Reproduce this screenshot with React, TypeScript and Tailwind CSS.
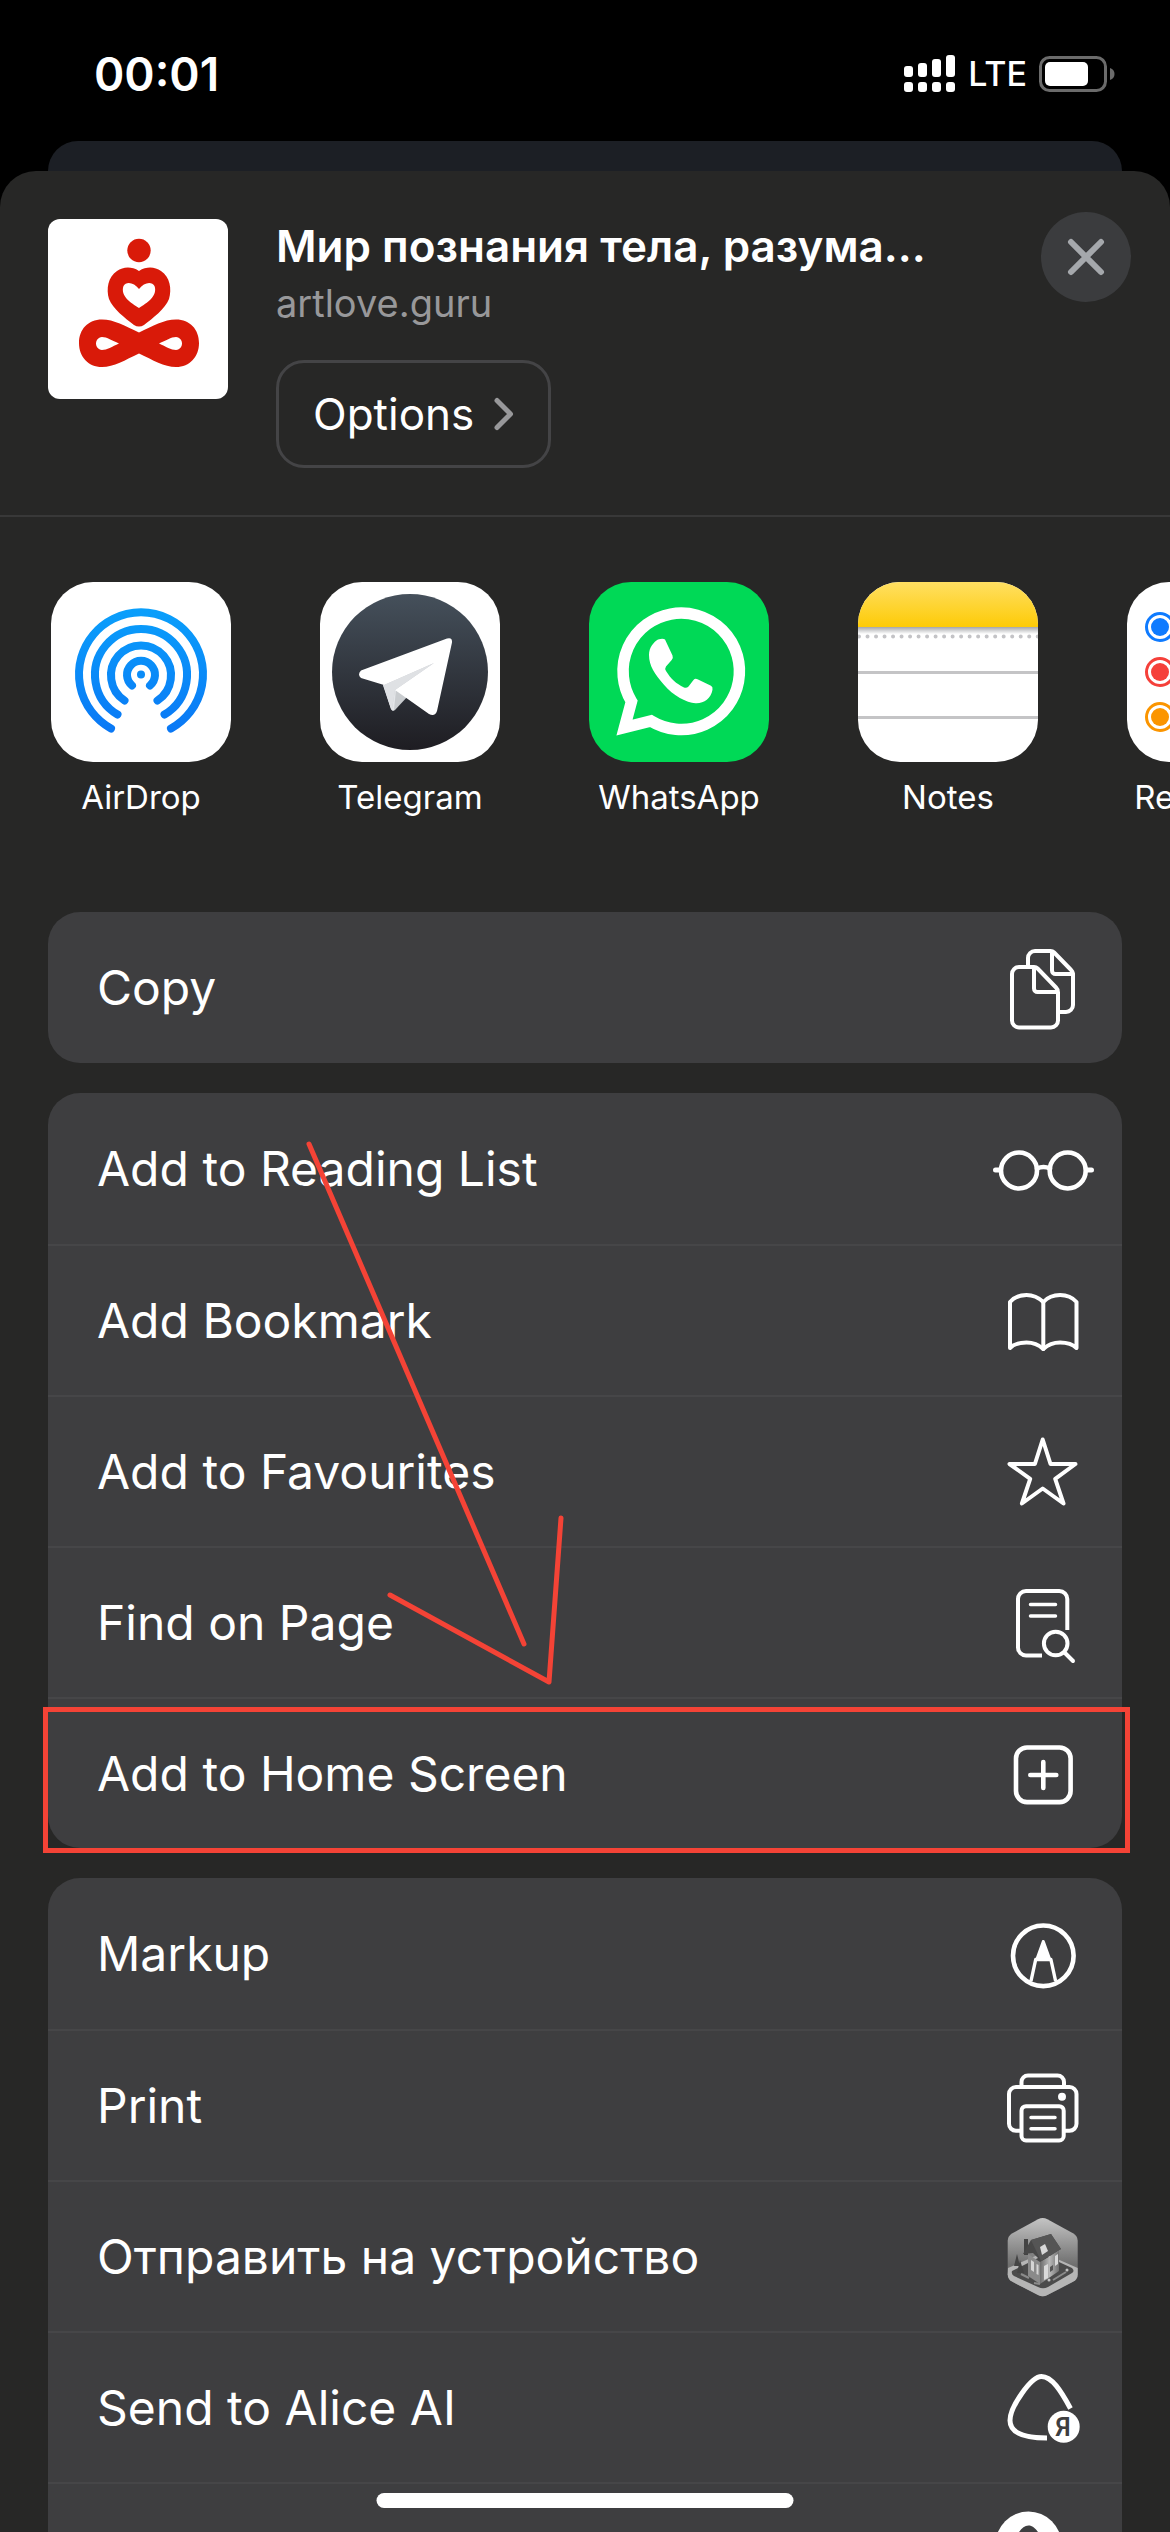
import React from 'react'

type Action = {
  label: string
  icon: React.ReactNode
  highlighted?: boolean
}

type ShareApp = {
  name: string
  icon: React.ReactNode
}

function Glyph({ children }: { children: React.ReactNode }) {
  return (
    <svg
      viewBox="0 0 102 102"
      className="size-[102px] shrink-0"
      fill="none"
      stroke="#fff"
      strokeWidth="4"
      strokeLinecap="round"
      strokeLinejoin="round"
      aria-hidden="true"
    >
      {children}
    </svg>
  )
}

function CopyIcon() {
  return (
    <Glyph>
      <path d="M36 29V21a7 7 0 0 1 7-7h15.500a5 5 0 0 1 3.600 1.500l17 17.500a6 6 0 0 1 1.900 4.500V68a7 7 0 0 1-7 7h-6" />
      <path d="M60 15v18.500a3.500 3.500 0 0 0 3.500 3.500H81" />
      <path d="M27 30h15a5 5 0 0 1 3.600 1.500L64 50.500a7 7 0 0 1 2 5V83.500a7 7 0 0 1-7 7H27a7 7 0 0 1-7-7V37a7 7 0 0 1 7-7z" />
      <path d="M42 31v20.500a3.500 3.500 0 0 0 3.500 3.500H65" />
    </Glyph>
  )
}

function GlassesIcon() {
  return (
    <Glyph>
      <circle cx="27" cy="52.500" r="18" strokeWidth="4.600" />
      <circle cx="75.700" cy="52.500" r="18" strokeWidth="4.600" />
      <path d="M45 50.500q6.500-3 13 0" strokeWidth="4.600" />
      <path d="M3.500 52H8M95 52h4.500" strokeWidth="5" />
    </Glyph>
  )
}

function BookIcon() {
  return (
    <Glyph>
      <path d="M51.300 32C46 27 40 25 34.500 25S22 27.500 18 32v46c4-4 10.500-5.500 16.500-5.500S47 75 51.300 79c4.300-4 10.800-6.500 16.800-6.500S80.500 74 84.500 78V32C80.500 27.500 74 25 68.100 25S56 27 51.300 32z" />
      <path d="M51.300 32v47" />
    </Glyph>
  )
}

function StarIcon() {
  return (
    <Glyph>
      <path d="M50.700 18.500l7.800 24.500h25L63.200 57.800 71.500 82.500 50.700 67.500 29.900 82.500l8.300-24.700L17.500 43h25.400z" />
    </Glyph>
  )
}

function FindIcon() {
  return (
    <Glyph>
      <path
        d="M75.300 58V27a8 8 0 0 0-8-8H34a8 8 0 0 0-8 8v48.500a8 8 0 0 0 8 8h16"
        strokeLinecap="butt"
      />
      <path d="M38.500 32.500h25M38.500 44h25" strokeWidth="3.500" />
      <circle cx="63.700" cy="71.500" r="11.800" />
      <path d="M72.500 80.500l8.500 8.500" />
    </Glyph>
  )
}

function AddIcon() {
  return (
    <Glyph>
      <rect x="24" y="24.500" width="54.600" height="54.600" rx="11" strokeWidth="4.600" />
      <path d="M51.300 39v26M38.300 52h26" strokeWidth="4.600" />
    </Glyph>
  )
}

function MarkupIcon() {
  return (
    <Glyph>
      <circle cx="51.300" cy="52.800" r="30.300" strokeWidth="4.600" />
      <path d="M51.300 38.500L45 56h12.600z" fill="#fff" strokeWidth="3" />
      <path d="M39 78l4.700-21.500h15.200L63.600 78" strokeWidth="3.400" strokeLinecap="butt" />
    </Glyph>
  )
}

function PrintIcon() {
  return (
    <Glyph>
      <path d="M29.500 31v-4a6.500 6.500 0 0 1 6.500-6.500h29.500a6.500 6.500 0 0 1 6.500 6.500v4" strokeLinecap="butt" />
      <path
        d="M29 75.800h-5a7 7 0 0 1-7-7V39a7 7 0 0 1 7-7h53.500a7 7 0 0 1 7 7v29.800a7 7 0 0 1-7 7h-5"
        strokeLinecap="butt"
      />
      <rect x="29.500" y="51.200" width="42.200" height="34.300" rx="4.500" />
      <path d="M39 62.500h24M39 73.800h24" strokeWidth="3.500" />
      <circle cx="70" cy="41.800" r="4" fill="#fff" stroke="none" />
    </Glyph>
  )
}

function HouseIcon() {
  return (
    <svg viewBox="0 0 102 102" className="size-[102px] shrink-0" aria-hidden="true">
      <defs>
        <linearGradient id="house-sky" x1="0" y1="0" x2="0" y2="1">
          <stop offset="0" stopColor="#c4c4c4" />
          <stop offset="0.600" stopColor="#6f6f6f" />
          <stop offset="1" stopColor="#8c8c8c" />
        </linearGradient>
        <linearGradient id="house-wall" x1="0" y1="0" x2="1" y2="0">
          <stop offset="0" stopColor="#6c6c6c" />
          <stop offset="0.500" stopColor="#b8b8b8" />
          <stop offset="1" stopColor="#707070" />
        </linearGradient>
      </defs>
      <path
        d="M46 13.200q4.700-2.400 9.400 0L81 27.200q4.700 2.600 4.700 7.500v33.500q0 5-4.700 7.600L55.400 89q-4.700 2.400-9.400 0L20.400 75.800q-4.700-2.600-4.700-7.600V34.700q0-4.900 4.700-7.500z"
        fill="url(#house-sky)"
      />
      <path
        d="M16 62l32-14q3-1.200 6 0l31.700 14v6.200q0 5-4.700 7.600L55.400 89q-4.700 2.400-9.400 0L20.400 75.800q-4.700-2.600-4.700-7.600z"
        fill="#b5b5b5"
      />
      <path d="M20 65l28-14h8l24 11q3 3 0 5L56 81q-5 2.500-10 0L22 70q-3-2-2-5z" fill="#4b4b4b" />
      <path d="M36 48l12 8v22l-12-8z" fill="#8a8a8a" />
      <path d="M48 56l19-11v20L48 78z" fill="url(#house-wall)" />
      <path d="M39 54l3 2v10l-3-2zM44.500 58l2 1v10l-2-1z" fill="#d4d4d4" />
      <path d="M52 60l4-2v14l-4 2zM63 50l3-2v10l-3 2z" fill="#dadada" />
      <path d="M58 61l3-2v5l-3 2z" fill="#555" />
      <path d="M32 33h4v16h-4zM25 48l3 12h-6zM28 54l4 13h-7z" fill="#444" />
      <path d="M31 48l8-14 20-6 10 15-20 12-8-8z" fill="#484848" />
      <path d="M39 34l20-6 10 15-20 12z" fill="#555" />
      <path d="M48 41l5-3 3 7-6 4z" fill="#d8d8d8" />
      <path d="M29 68l8 4M61 74l13-8M42 77l6 1" stroke="#8b8b8b" strokeWidth="2" />
      <circle cx="75" cy="64" r="1.500" fill="#c2c2c2" />
      <circle cx="57" cy="74" r="1.500" fill="#c2c2c2" />
    </svg>
  )
}

function AliceIcon() {
  return (
    <Glyph>
      <path
        d="M78.500 51.500C69 34 60 19.500 49.500 19.500S18 50 18 63.500C18 77 33 81 55 81"
        strokeWidth="5"
        strokeLinecap="butt"
      />
      <circle cx="71.700" cy="69.800" r="16" fill="#fff" stroke="none" />
      <text
        x="71"
        y="79"
        textAnchor="middle"
        fontSize="25"
        fontWeight="600"
        fontFamily="Roboto, sans-serif"
        fill="#3e3e40"
        stroke="none"
      >
        Я
      </text>
    </Glyph>
  )
}

function BadgeIcon() {
  return (
    <Glyph>
      <circle cx="36.500" cy="36.500" r="33" fill="#fff" stroke="none" />
      <path d="M36.500 17.500c-6 0-10 7-15 15v20h30v-20c-5-8-9-15-15-15z" fill="#3e3e40" stroke="none" />
    </Glyph>
  )
}

function YogaLogo() {
  return (
    <svg viewBox="0 0 180 180" className="mt-[7px] size-[180px] shrink-0 rounded-xl bg-white" aria-hidden="true">
      <circle cx="91" cy="31.500" r="11.700" fill="#d91a09" />
      <path
        fillRule="evenodd"
        fill="#d91a09"
        d="M91 52C83 47 75 48 69 52c-9 6-11 18-8 28 4 10 16 19 25 26q5 3 10 0c9-7 21-16 25-26 3-10 1-22-8-28-6-4-14-5-22 0zM91 70C86 63 78 62 75.500 67 72 77 83 84 91 89c8-5 19-12 15.500-22C104 62 96 63 91 70z"
      />
      <path
        fillRule="evenodd"
        fill="#d91a09"
        d="M91 113.500C77 107 66 100.500 54 100.500c-14 0-23 10-23 23.500s9 24 23 24c12 0 23-7 37-13.500C105 141 116 148 128 148c14 0 23-10.500 23-24s-9-23.500-23-23.500c-12 0-23 6.500-37 13zM71 124.500c-7-3-12-6.500-17-6.500-8 1-8 12 0 13 5 0 10-3.500 17-6.500zM111 124.500c7-3 12-6.500 17-6.500 8 1 8 12 0 13-5 0-10-3.500-17-6.500z"
      />
    </svg>
  )
}

function AirDropIcon() {
  return (
    <svg viewBox="0 0 180 180" className="size-[180px]" aria-hidden="true">
      <defs>
        <linearGradient id="airdrop" gradientUnits="userSpaceOnUse" x1="0" y1="27" x2="0" y2="150">
          <stop offset="0" stopColor="#0a9ffb" />
          <stop offset="1" stopColor="#0a78f5" />
        </linearGradient>
      </defs>
      <rect width="180" height="180" fill="#fff" />
      <g fill="none" stroke="url(#airdrop)" strokeWidth="8" strokeLinecap="round">
        <path d="M60 146.500a62 62 0 1 1 60 0" />
        <path d="M66.500 132.500a46 46 0 1 1 47 0" />
        <path d="M73.500 118.500a30 30 0 1 1 33 0" />
        <path d="M81 103.500a14 14 0 1 1 18 0" />
      </g>
      <circle cx="90" cy="92.500" r="4" fill="#0a8cf8" />
    </svg>
  )
}

function TelegramIcon() {
  return (
    <svg viewBox="0 0 180 180" className="size-[180px]" aria-hidden="true">
      <defs>
        <linearGradient id="telegram" x1="0" y1="0" x2="0" y2="1">
          <stop offset="0" stopColor="#45505b" />
          <stop offset="1" stopColor="#1e1d22" />
        </linearGradient>
      </defs>
      <rect width="180" height="180" fill="#fff" />
      <circle cx="90" cy="90" r="78" fill="url(#telegram)" />
      <path d="M63 103l8 24q2 3 4 1l13-14-8-8z" fill="#c9cccf" />
      <path d="M63 103l8 24q1.500 3 3 1l2-20 8-8-10-5z" fill="#e3e5e8" />
      <path
        d="M41 88.500L127 56.500q5.500-1.500 5 4L117 129q-2 6-8 3L75 108 64 103 41 96q-4-3.500 0-7.500z"
        fill="#fff"
      />
      <path d="M64 103l50-22-39 27-3 19z" fill="#cfd1d4" stroke="none" />
      <path d="M64 103l50-22-39 27-3 19q-1 1-8-24z" fill="#dfe1e4" />
    </svg>
  )
}

function WhatsAppIcon() {
  return (
    <svg viewBox="0 0 180 180" className="size-[180px]" aria-hidden="true">
      <rect width="180" height="180" fill="#00d956" />
      <path
        d="M35.500 145.500l7-26A58.200 58.200 0 1 1 62 139z"
        fill="none"
        stroke="#fff"
        strokeWidth="11.500"
      />
      <path
        d="M76 57.500l7.500 16q1 2.500-.800 4.500l-5.700 6.500q-1.500 2 0 4.500c5 8 10 12.500 18 16.500q2.500 1 4.500-1l5-6.500q1.500-2 4-.800l13.500 6.500q2 1 1.500 4c-1.500 9-9 14-17 13.500-9-.700-22-7-32-19C66 92 60 84 60 73c0-8 5-13 9-15.500q5-1.500 7 0z"
        fill="#fff"
      />
    </svg>
  )
}

function NotesIcon() {
  return (
    <svg viewBox="0 0 180 180" className="size-[180px]" aria-hidden="true">
      <defs>
        <linearGradient id="notes" x1="0" y1="0" x2="0" y2="1">
          <stop offset="0" stopColor="#ffdf62" />
          <stop offset="1" stopColor="#fdcb07" />
        </linearGradient>
        <linearGradient id="notes-shadow" x1="0" y1="0" x2="0" y2="1">
          <stop offset="0" stopColor="#a5a7aa" />
          <stop offset="1" stopColor="#fff" />
        </linearGradient>
      </defs>
      <rect width="180" height="180" fill="#fff" />
      <rect width="180" height="45" fill="url(#notes)" />
      <rect y="45" width="180" height="7" fill="url(#notes-shadow)" />
      <path d="M1 54.500h180" stroke="#c3c3c6" strokeWidth="4" strokeLinecap="round" strokeDasharray="0.010 8.500" />
      <path d="M0 90.500h180M0 135.500h180" stroke="#c4c4c6" strokeWidth="3" />
    </svg>
  )
}

function RemindersIcon() {
  const dots = [
    { y: 45, color: '#0f7bff' },
    { y: 90, color: '#f5403a' },
    { y: 135, color: '#fb9500' },
  ]
  return (
    <svg viewBox="0 0 180 180" className="size-[180px]" aria-hidden="true">
      <rect width="180" height="180" fill="#fff" />
      {dots.map(dot => (
        <g key={dot.y}>
          <circle cx="33" cy={dot.y} r="13.500" fill="none" stroke={dot.color} strokeWidth="3" />
          <circle cx="33" cy={dot.y} r="9" fill={dot.color} />
          <path d={`M60 ${dot.y}h120`} stroke="#d1d1d6" strokeWidth="3" />
        </g>
      ))}
    </svg>
  )
}

const apps: ShareApp[] = [
  { name: 'AirDrop', icon: <AirDropIcon /> },
  { name: 'Telegram', icon: <TelegramIcon /> },
  { name: 'WhatsApp', icon: <WhatsAppIcon /> },
  { name: 'Notes', icon: <NotesIcon /> },
  { name: 'Reminders', icon: <RemindersIcon /> },
]

const copyActions: Action[] = [{ label: 'Copy', icon: <CopyIcon /> }]

const safariActions: Action[] = [
  { label: 'Add to Reading List', icon: <GlassesIcon /> },
  { label: 'Add Bookmark', icon: <BookIcon /> },
  { label: 'Add to Favourites', icon: <StarIcon /> },
  { label: 'Find on Page', icon: <FindIcon /> },
  { label: 'Add to Home Screen', icon: <AddIcon />, highlighted: true },
]

const moreActions: Action[] = [
  { label: 'Markup', icon: <MarkupIcon /> },
  { label: 'Print', icon: <PrintIcon /> },
  { label: 'Отправить на устройство', icon: <HouseIcon /> },
  { label: 'Send to Alice AI', icon: <AliceIcon /> },
  { label: '', icon: <BadgeIcon /> },
]

function ActionGroup({ actions, children }: { actions: Action[]; children?: React.ReactNode }) {
  return (
    <div className="relative rounded-[32px] bg-[#3e3e40]">
      <ul>
        {actions.map((action, i) => (
          <li key={i} className={`relative h-[151px] ${i > 0 ? 'border-t-2 border-[#464648]' : ''}`}>
            <button className="flex size-full items-center justify-between pr-7 pl-[49px] text-left text-[48px] leading-[60px]">
              <span>{action.label}</span>
              {action.icon}
            </button>
            {action.highlighted && (
              <div className="pointer-events-none absolute -right-2 -bottom-[5px] -left-[5px] top-2 border-[5px] border-[#f44336]" />
            )}
          </li>
        ))}
      </ul>
      {children}
    </div>
  )
}

function StatusBar() {
  return (
    <div className="flex h-[141px] items-start justify-between pt-[46px] pr-[55px] pl-[94px]">
      <span className="text-[46px] leading-[56px] font-semibold">00:01</span>
      <div className="flex h-14 items-center gap-3">
        <svg viewBox="0 0 52 38" className="h-[38px] w-[52px]" fill="#fff" aria-hidden="true">
          <rect x="0" y="11" width="9" height="11" rx="3" />
          <rect x="14" y="8" width="9" height="14" rx="3" />
          <rect x="28" y="4" width="9" height="18" rx="3" />
          <rect x="42" y="0" width="9" height="22" rx="3" />
          <rect x="0" y="27" width="9" height="10" rx="3" />
          <rect x="14" y="27" width="9" height="10" rx="3" />
          <rect x="28" y="27" width="9" height="10" rx="3" />
          <rect x="42" y="27" width="9" height="10" rx="3" />
        </svg>
        <span className="text-[34px] leading-[56px] font-medium">LTE</span>
        <svg viewBox="0 0 76 36" className="h-[36px] w-[76px]" aria-hidden="true">
          <rect x="1.500" y="1.500" width="65" height="33" rx="9" fill="none" stroke="#6b6b6b" strokeWidth="3" />
          <rect x="6" y="6" width="43" height="24" rx="5" fill="#fff" />
          <path d="M71 12q4.500 1.500 4.500 6t-4.500 6z" fill="#6b6b6b" />
        </svg>
      </div>
    </div>
  )
}

export default function App() {
  return (
    <div className="relative flex h-screen flex-col overflow-hidden bg-black font-['Inter','Liberation_Sans',sans-serif] text-white">
      <StatusBar />
      <div className="mx-12 h-[30px] shrink-0 rounded-t-[30px] bg-[#1c1f25]" />

      <div className="min-h-0 flex-1 overflow-hidden rounded-t-[36px] bg-[#272726]">
        <header className="flex items-start border-b-2 border-[#383838] pt-[41px] pr-[39px] pb-[47px] pl-12">
          <YogaLogo />
          <div className="ml-12 min-w-0 flex-1">
            <h1 className="mt-[6px] truncate text-[44px] leading-[56px] font-semibold">Мир познания тела, разума...</h1>
            <p className="mt-[5px] text-[38px] leading-[48px] text-[#98989a]">artlove.guru</p>
            <button className="mt-[33px] flex h-[108px] items-center gap-5 rounded-[28px] border-[3px] border-[#444446] px-[34px] text-[44px] leading-[56px]">
              Options
              <svg viewBox="0 0 20 34" className="h-[34px] w-5" fill="none" stroke="#98989a" strokeWidth="5" strokeLinecap="round" strokeLinejoin="round" aria-hidden="true">
                <path d="M3 3.500L16.500 17 3 30.500" />
              </svg>
            </button>
          </div>
          <button aria-label="Close" className="flex size-[90px] shrink-0 items-center justify-center rounded-full bg-[#3b3c3e]">
            <svg viewBox="0 0 38 38" className="size-[38px]" stroke="#a5a8ac" strokeWidth="6" strokeLinecap="round" aria-hidden="true">
              <path d="M4 4l30 30M34 4L4 34" />
            </svg>
          </button>
        </header>

        <div className="flex gap-[89px] overflow-hidden pt-[65px] pl-[51px]">
          {apps.map(app => (
            <button key={app.name} className="flex w-[180px] shrink-0 flex-col items-center">
              <span className="overflow-hidden rounded-[42px]">{app.icon}</span>
              <span className="mt-[15px] text-[33px] leading-[40px]">{app.name}</span>
            </button>
          ))}
        </div>

        <div className="mx-12 mt-[95px] flex flex-col gap-[30px]">
          <ActionGroup actions={copyActions} />
          <ActionGroup actions={safariActions}>
            <svg
              viewBox="0 0 560 600"
              className="pointer-events-none absolute top-0 left-0 h-[600px] w-[560px]"
              fill="none"
              stroke="#f44336"
              strokeWidth="5"
              strokeLinecap="round"
              strokeLinejoin="round"
              aria-hidden="true"
            >
              <path d="M261 51L476 551M342 502l159 87 12-164" />
            </svg>
          </ActionGroup>
          <ActionGroup actions={moreActions} />
        </div>
      </div>

      <div className="absolute bottom-6 left-1/2 h-[15px] w-[417px] -translate-x-1/2 rounded-full bg-white" />
    </div>
  )
}
